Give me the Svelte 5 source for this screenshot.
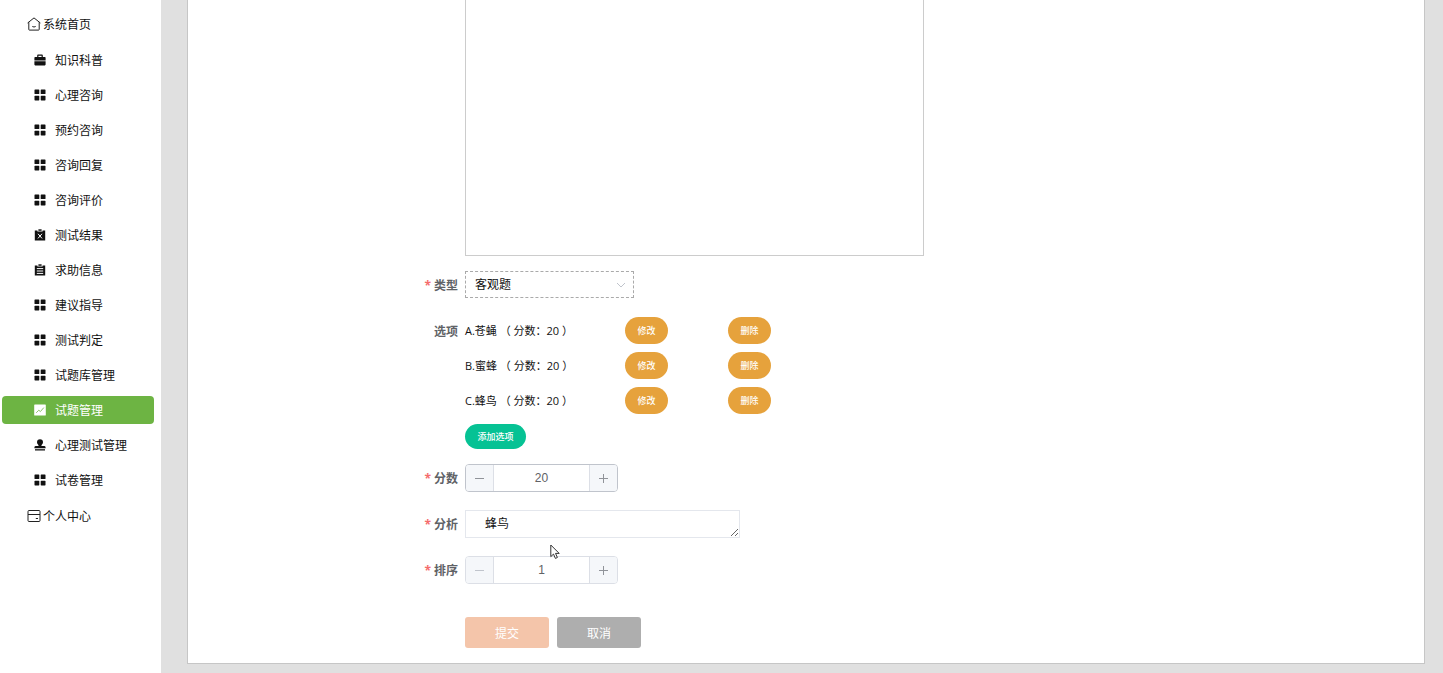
<script lang="ts">
  const menu = [
    { icon: "case",    label: "知识科普" },
    { icon: "grid",    label: "心理咨询" },
    { icon: "grid",    label: "预约咨询" },
    { icon: "grid",    label: "咨询回复" },
    { icon: "grid",    label: "咨询评价" },
    { icon: "release", label: "测试结果" },
    { icon: "order",   label: "求助信息" },
    { icon: "grid",    label: "建议指导" },
    { icon: "grid",    label: "测试判定" },
    { icon: "grid",    label: "试题库管理" },
    { icon: "chart",   label: "试题管理" },
    { icon: "stamp",   label: "心理测试管理" },
    { icon: "grid",    label: "试卷管理" },
  ];

  const options = [
    { code: "A", text: "苍蝇", score: 20 },
    { code: "B", text: "蜜蜂", score: 20 },
    { code: "C", text: "蜂鸟", score: 20 },
  ];

  let active = $state("试题管理");
  let content = $state("");
  let kind = $state("客观题");
  let score = $state(20);
  let analysis = $state("蜂鸟");
  let sort = $state(1);
</script>

{#snippet icon(name: string)}
  <svg class="icon" viewBox="0 0 12 12" aria-hidden="true">
    {#if name === "grid"}
      <rect x="0.5" y="0.5" width="4.8" height="4.6" rx="0.6" />
      <rect x="6.7" y="0.5" width="4.8" height="4.6" rx="0.6" />
      <rect x="0.5" y="6.8" width="4.8" height="4.6" rx="0.6" />
      <rect x="6.7" y="6.8" width="4.8" height="4.6" rx="0.6" />
    {:else if name === "case"}
      <path d="M3.2 3V1.4q0-.8.8-.8h4q.8 0 .8.8V3h2q.8 0 .8.8v2.7H.4V3.8Q.4 3 1.2 3zM4.4 1.7V3h3.2V1.7z" fill-rule="evenodd" />
      <path d="M.4 7.3h11.2v3.3q0 .8-.8.8H1.2q-.8 0-.8-.8z" />
    {:else if name === "release"}
      <path d="M.8 1.4h2.6v1.2h5.2V1.4h2.6v10.2H.8z" />
      <path d="M4.4.3h3.2v1.5H4.4z" />
      <path class="cut" d="M4 4.8l4 4.6M8 4.8L4 9.4" />
    {:else if name === "order"}
      <path d="M.8 1.4h2.6v1.2h5.2V1.4h2.6v10.2H.8z" />
      <path d="M4.4.3h3.2v1.5H4.4z" />
      <path class="cut" d="M2.8 4.6h6.4M2.8 7h6.4M2.8 9.4h6.4" />
    {:else if name === "chart"}
      <rect x="0.2" y="0.4" width="11.6" height="11.2" rx="0.6" />
      <path class="trend" d="M2.2 8.8l2.6-2.6 1.6 1.4 3.4-4" />
    {:else if name === "stamp"}
      <path d="M6 .3a3 3 0 0 1 3 3c0 1.8-1.6 2.2-1.6 3.8H10q1.6 0 1.6 1.4v.7H.4v-.7Q.4 7.1 2 7.1h2.6C4.600 5.500 3 5.100 3 3.300a3 3 0 0 1 3-3z" />
      <path d="M1 10.200h10v1.300H1z" />
    {/if}
  </svg>
{/snippet}

{#snippet sign(plus: boolean)}
  <svg class="sign" viewBox="0 0 11 11" aria-hidden="true">
    <path d="M1 5.5h9" />
    {#if plus}<path d="M5.5 1v9" />{/if}
  </svg>
{/snippet}

<div class="layout">
  <aside>
    <nav>
      <a class="top" href="#/home">
        <svg class="outline" viewBox="0 0 14 14" aria-hidden="true">
          <path d="M.6 6L7 .9 13.4 6M1.800 5.200v7.300q0 .6.6.6h9.200q.6 0 .6-.6V5.200M5.300 9.500q1.700 1 3.400 0" />
        </svg>
        系统首页
      </a>
      <div class="sub">
        {#each menu as item}
          <a
            href="#/{item.icon}"
            class:active={active === item.label}
            onclick={(e) => { e.preventDefault(); active = item.label; }}
          >
            {@render icon(item.icon)}
            {item.label}
          </a>
        {/each}
      </div>
      <a class="top" href="#/center">
        <svg class="outline" viewBox="0 0 14 14" aria-hidden="true">
          <rect x="1" y="1.500" width="12" height="11" rx="1" />
          <path d="M1 5.500h12M8.800 9.500h2.200" />
        </svg>
        个人中心
      </a>
    </nav>
  </aside>

  <main>
    <form onsubmit={(e) => e.preventDefault()}>
      <div class="row first">
        <span class="label"></span>
        <textarea class="editor" aria-label="内容" bind:value={content}></textarea>
      </div>

      <div class="row">
        <label class="label required" for="kind">类型</label>
        <div class="select">
          <select id="kind" bind:value={kind}>
            <option>客观题</option>
          </select>
          <svg class="arrow" viewBox="0 0 10 10" aria-hidden="true"><path d="M1 3l4 4 4-4" /></svg>
        </div>
      </div>

      <div class="row options">
        <span class="label">选项</span>
        <div>
          <ul>
            {#each options as o}
              <li>
                <span>{o.code}.{o.text} （ 分数：{o.score} ）</span>
                <button type="button" class="pill">修改</button>
                <button type="button" class="pill">删除</button>
              </li>
            {/each}
          </ul>
          <button type="button" class="pill add">添加选项</button>
        </div>
      </div>

      <div class="row">
        <label class="label required" for="score">分数</label>
        <div class="number hover">
          <button type="button" aria-label="减少" onclick={() => score--}>{@render sign(false)}</button>
          <input id="score" type="text" inputmode="numeric" bind:value={score} />
          <button type="button" aria-label="增加" onclick={() => score++}>{@render sign(true)}</button>
        </div>
      </div>

      <div class="row">
        <label class="label required" for="analysis">分析</label>
        <textarea id="analysis" class="analysis" rows="1" bind:value={analysis}></textarea>
      </div>

      <div class="row">
        <label class="label required" for="sort">排序</label>
        <div class="number">
          <button type="button" aria-label="减少" disabled={sort <= 1} onclick={() => sort--}>{@render sign(false)}</button>
          <input id="sort" type="text" inputmode="numeric" bind:value={sort} />
          <button type="button" aria-label="增加" onclick={() => sort++}>{@render sign(true)}</button>
        </div>
      </div>

      <div class="row actions">
        <span class="label"></span>
        <button type="submit" class="submit">提交</button>
        <button type="button" class="cancel">取消</button>
      </div>
    </form>
  </main>

  <svg class="pointer" viewBox="0 0 10 16" aria-hidden="true">
    <path d="M.8 1v11.600l2.700-2.500 1.900 4.300 2-.9-1.900-4.100h3.700z" />
  </svg>
</div>

<style>
  :global(body) {
    margin: 0;
    background: #e0e0e0;
  }

  .layout {
    position: relative;
    display: flex;
    min-height: 100vh;
    font-family: "Open Sans", "Noto Sans CJK SC", sans-serif;
    font-size: 12px;
    color: #111;
  }

  button, input, select, textarea {
    box-sizing: border-box;
    margin: 0;
    padding: 0;
    font-family: inherit;
    outline: none;
  }

  /* Sidebar */
  aside {
    width: 161px;
    flex-shrink: 0;
    background: #fff;
  }

  nav {
    display: flex;
    flex-direction: column;
    gap: 8px;
    padding: 10px 7px 0 2px;
  }

  .sub {
    display: flex;
    flex-direction: column;
    gap: 7px;
  }

  a {
    display: flex;
    align-items: center;
    gap: 9px;
    height: 28px;
    padding-left: 32px;
    border-radius: 4px;
    color: #111;
    text-decoration: none;
    white-space: nowrap;
  }

  a.top {
    gap: 2px;
    padding-left: 25px;
  }

  a.active {
    background: #6db443;
    color: #fff;
  }

  .icon {
    width: 12px;
    height: 12px;
    fill: currentColor;
  }

  .cut, .trend {
    fill: none;
    stroke: #fff;
    stroke-width: 1;
  }

  .trend { stroke: #8cc46a; }

  .outline {
    width: 14px;
    height: 14px;
    fill: none;
    stroke: #222;
    stroke-width: 1;
  }

  /* Form panel */
  main {
    flex: 1;
    padding: 0 18px 9px 26px;
  }

  form {
    background: #fff;
    border: 1px solid #c6c6c6;
    border-top: 0;
    padding-bottom: 15px;
  }

  .row {
    display: flex;
    margin-bottom: 18px;
  }

  .row.first, .row.options { margin-bottom: 15px; }

  .label {
    box-sizing: border-box;
    width: 277px;
    flex-shrink: 0;
    padding-right: 7px;
    text-align: right;
    font-size: 12px;
    font-weight: 700;
    line-height: 30px;
    height: 28px;
    color: #606266;
  }

  .required::before {
    content: "*";
    margin-right: 3px;
    color: #f56c6c;
  }

  .editor {
    width: 459px;
    height: 256px;
    border: 1px solid #ccc;
    border-top: 0;
    resize: none;
  }

  .select {
    position: relative;
    width: 169px;
  }

  select {
    width: 100%;
    height: 27px;
    padding: 0 9px;
    appearance: none;
    background: #fff;
    border: 1px dashed #aaa;
    font-size: 12px;
    color: #111;
  }

  .arrow {
    position: absolute;
    top: 9px;
    right: 8px;
    width: 10px;
    height: 10px;
    fill: none;
    stroke: #c0c4cc;
    pointer-events: none;
  }

  ul {
    display: flex;
    flex-direction: column;
    gap: 8px;
    margin: 0 0 10px;
    padding: 0;
    list-style: none;
  }

  li {
    display: grid;
    grid-template-columns: 160px 103px auto;
    align-items: center;
    font-size: 11px;
    line-height: 16px;
  }

  .pill {
    width: 43px;
    height: 27px;
    border: 0;
    border-radius: 14px;
    background: #e6a23c;
    color: #fff;
    font-size: 9px;
    font-weight: 500;
  }

  .pill.add {
    display: block;
    width: 61px;
    height: 25px;
    background: #06c294;
  }

  .number {
    box-sizing: border-box;
    display: flex;
    width: 153px;
    height: 28px;
    border: 1px solid #dcdfe6;
    border-radius: 4px;
    overflow: hidden;
  }

  .number.hover { border-color: #c0c4cc; }

  .number button {
    display: grid;
    place-items: center;
    width: 28px;
    flex-shrink: 0;
    border: 0;
    border-right: 1px solid #dcdfe6;
    background: #f5f7fa;
    color: #909399;
  }

  .number button:last-child {
    border-right: 0;
    border-left: 1px solid #dcdfe6;
  }

  .number button:disabled { color: #c0c4cc; }

  .number input {
    flex: 1;
    min-width: 0;
    border: 0;
    text-align: center;
    font-family: "Liberation Sans", sans-serif;
    font-size: 12px;
    color: #606266;
  }

  .sign {
    width: 11px;
    height: 11px;
    stroke: currentColor;
  }

  .analysis {
    width: 275px;
    height: 28px;
    padding: 0 19px;
    border: 1px solid #e4e7ed;
    font-size: 12px;
    line-height: 26px;
    color: #111;
    resize: vertical;
    overflow: hidden;
  }

  .actions {
    margin: 33px 0 0;
  }

  .actions button {
    width: 84px;
    height: 31px;
    margin-right: 8px;
    border: 0;
    border-radius: 3px;
    color: #fff;
    font-size: 12px;
  }

  .submit { background: #f4c5aa; }
  .cancel { background: #aeaeae; }

  .pointer {
    position: absolute;
    top: 544px;
    left: 550px;
    width: 10px;
    height: 16px;
    fill: #fff;
    stroke: #333;
    pointer-events: none;
  }
</style>
